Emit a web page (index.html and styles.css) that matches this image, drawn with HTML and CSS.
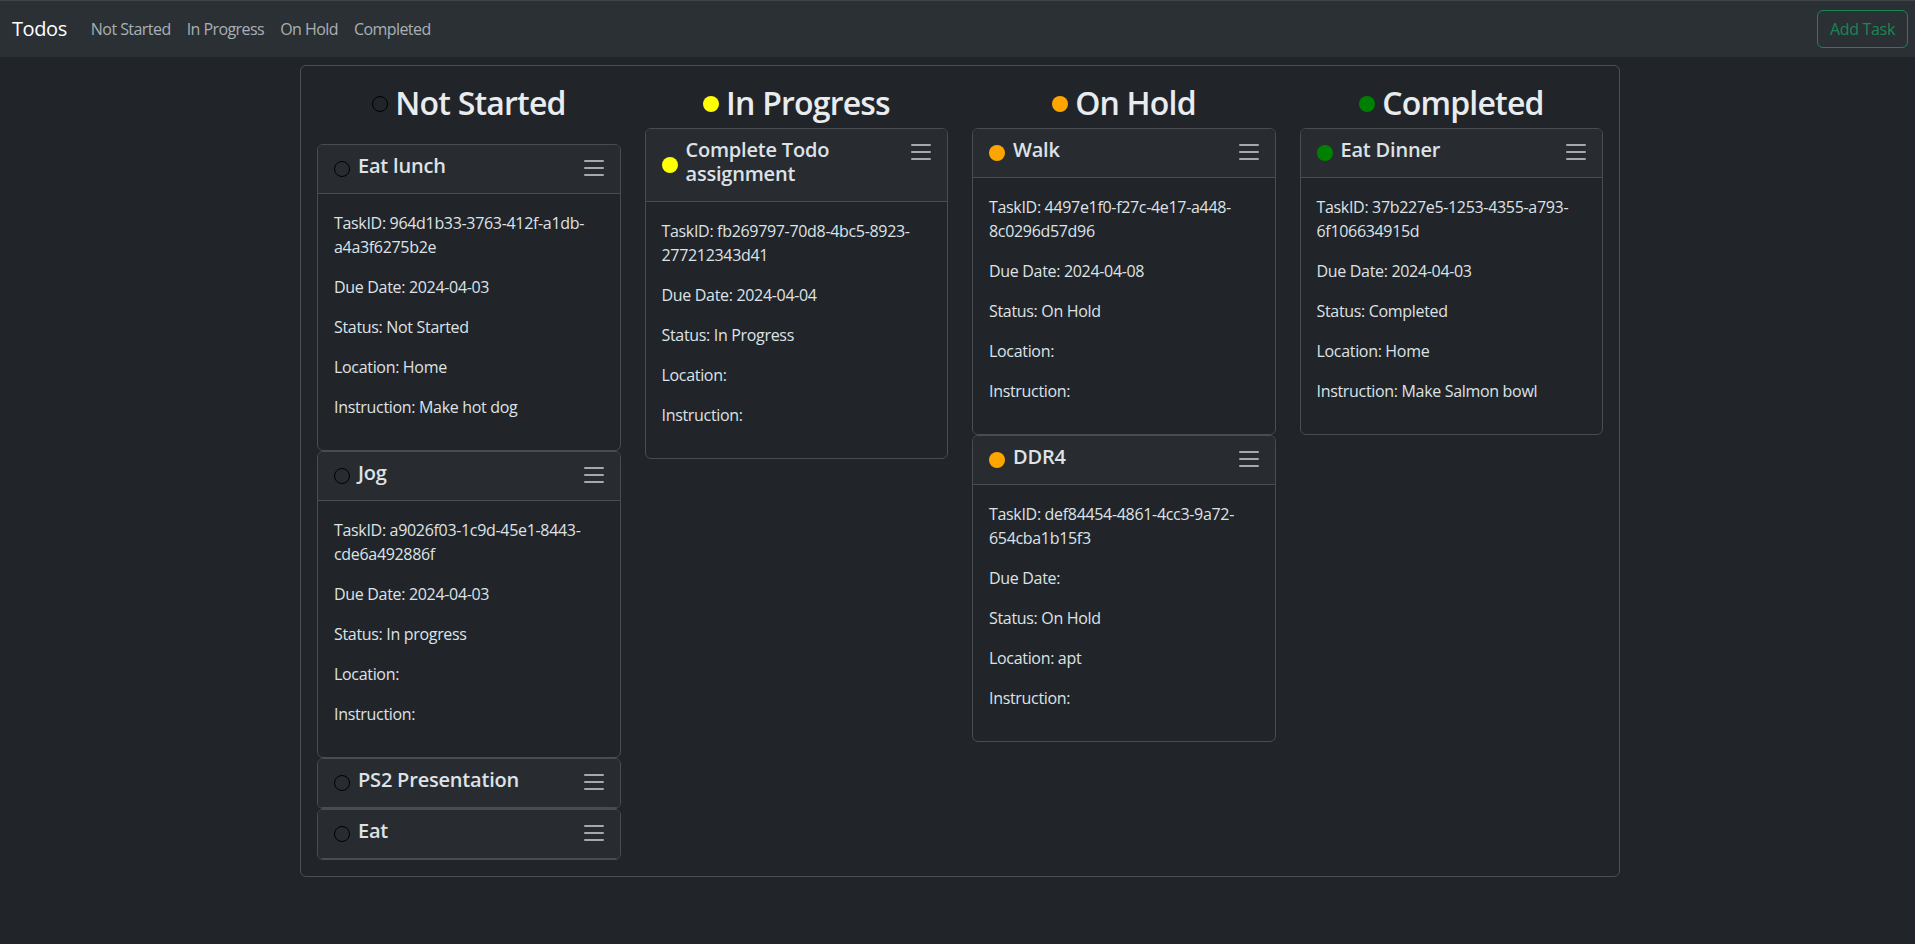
FILE: index.html
```html
<!DOCTYPE html>
<html lang="en">
<head>
<meta charset="utf-8">
<title>Todos</title>
<link rel="stylesheet" href="styles.css">
</head>
<body>
<div class="page">
  <nav class="navbar">
    <div class="nav-left">
      <a class="brand" href="#">Todos</a>
      <a class="nav-link" href="#">Not Started</a>
      <a class="nav-link" href="#">In Progress</a>
      <a class="nav-link" href="#">On Hold</a>
      <a class="nav-link" href="#">Completed</a>
    </div>
    <button class="btn-add">Add Task</button>
  </nav>

  <main class="board">
    <section class="column">
      <h2 class="col-title"><span class="dot dot-lg dot-none"></span> Not Started</h2>
      <div class="list list-first">
        <div class="card">
          <div class="card-header">
            <div class="title-wrap"><span class="dot dot-none"></span><h5 class="card-title">Eat lunch</h5></div>
            <svg class="menu" width="24" height="28" viewBox="0 0 24 28"><path d="M3 8h18M3 15h18M3 22h18"/></svg>
          </div>
          <div class="card-body">
            <p>TaskID: 964d1b33-3763-412f-a1db-a4a3f6275b2e</p>
            <p>Due Date: 2024-04-03</p>
            <p>Status: Not Started</p>
            <p>Location: Home</p>
            <p>Instruction: Make hot dog</p>
          </div>
        </div>
        <div class="card">
          <div class="card-header">
            <div class="title-wrap"><span class="dot dot-none"></span><h5 class="card-title">Jog</h5></div>
            <svg class="menu" width="24" height="28" viewBox="0 0 24 28"><path d="M3 8h18M3 15h18M3 22h18"/></svg>
          </div>
          <div class="card-body">
            <p>TaskID: a9026f03-1c9d-45e1-8443-cde6a492886f</p>
            <p>Due Date: 2024-04-03</p>
            <p>Status: In progress</p>
            <p>Location:</p>
            <p>Instruction:</p>
          </div>
        </div>
        <div class="card">
          <div class="card-header card-header-only">
            <div class="title-wrap"><span class="dot dot-none"></span><h5 class="card-title">PS2 Presentation</h5></div>
            <svg class="menu" width="24" height="28" viewBox="0 0 24 28"><path d="M3 8h18M3 15h18M3 22h18"/></svg>
          </div>
        </div>
        <div class="card">
          <div class="card-header card-header-only">
            <div class="title-wrap"><span class="dot dot-none"></span><h5 class="card-title">Eat</h5></div>
            <svg class="menu" width="24" height="28" viewBox="0 0 24 28"><path d="M3 8h18M3 15h18M3 22h18"/></svg>
          </div>
        </div>
      </div>
    </section>

    <section class="column">
      <h2 class="col-title"><span class="dot dot-lg dot-yellow"></span> In Progress</h2>
      <div class="list">
        <div class="card">
          <div class="card-header">
            <div class="title-wrap"><span class="dot dot-yellow"></span><h5 class="card-title">Complete Todo assignment</h5></div>
            <svg class="menu" width="24" height="28" viewBox="0 0 24 28"><path d="M3 8h18M3 15h18M3 22h18"/></svg>
          </div>
          <div class="card-body">
            <p>TaskID: fb269797-70d8-4bc5-8923-277212343d41</p>
            <p>Due Date: 2024-04-04</p>
            <p>Status: In Progress</p>
            <p>Location:</p>
            <p>Instruction:</p>
          </div>
        </div>
      </div>
    </section>

    <section class="column">
      <h2 class="col-title"><span class="dot dot-lg dot-orange"></span> On Hold</h2>
      <div class="list">
        <div class="card">
          <div class="card-header">
            <div class="title-wrap"><span class="dot dot-orange"></span><h5 class="card-title">Walk</h5></div>
            <svg class="menu" width="24" height="28" viewBox="0 0 24 28"><path d="M3 8h18M3 15h18M3 22h18"/></svg>
          </div>
          <div class="card-body">
            <p>TaskID: 4497e1f0-f27c-4e17-a448-8c0296d57d96</p>
            <p>Due Date: 2024-04-08</p>
            <p>Status: On Hold</p>
            <p>Location:</p>
            <p>Instruction:</p>
          </div>
        </div>
        <div class="card">
          <div class="card-header">
            <div class="title-wrap"><span class="dot dot-orange"></span><h5 class="card-title">DDR4</h5></div>
            <svg class="menu" width="24" height="28" viewBox="0 0 24 28"><path d="M3 8h18M3 15h18M3 22h18"/></svg>
          </div>
          <div class="card-body">
            <p>TaskID: def84454-4861-4cc3-9a72-654cba1b15f3</p>
            <p>Due Date:</p>
            <p>Status: On Hold</p>
            <p>Location: apt</p>
            <p>Instruction:</p>
          </div>
        </div>
      </div>
    </section>

    <section class="column">
      <h2 class="col-title"><span class="dot dot-lg dot-green"></span> Completed</h2>
      <div class="list">
        <div class="card">
          <div class="card-header">
            <div class="title-wrap"><span class="dot dot-green"></span><h5 class="card-title">Eat Dinner</h5></div>
            <svg class="menu" width="24" height="28" viewBox="0 0 24 28"><path d="M3 8h18M3 15h18M3 22h18"/></svg>
          </div>
          <div class="card-body">
            <p>TaskID: 37b227e5-1253-4355-a793-6f106634915d</p>
            <p>Due Date: 2024-04-03</p>
            <p>Status: Completed</p>
            <p>Location: Home</p>
            <p>Instruction: Make Salmon bowl</p>
          </div>
        </div>
      </div>
    </section>
  </main>
</div>
</body>
</html>
```

FILE: styles.css
```css
html {
  overflow: hidden;
  background: #212529;
}
body {
  margin: 0;
  background: #212529;
  color: #dee2e6;
  font-family: "Open Sans", "Noto Sans", sans-serif;
  font-size: 16px;
  line-height: 1.5;
}
.page {
  width: 1920px;
  min-height: 944px;
}
.navbar {
  display: flex;
  align-items: center;
  justify-content: space-between;
  background: #2b3035;
  border-top: 1px solid #3f4449;
  padding: 8px 12px;
}
.nav-left {
  display: flex;
  align-items: center;
}
.brand {
  color: #fff;
  font-size: 20px;
  text-decoration: none;
  margin-right: 16px;
  padding: 5px 0;
  line-height: 1.5;
  letter-spacing: -0.02em;
}
.nav-link {
  color: rgba(222, 226, 230, 0.72);
  text-decoration: none;
  padding: 8px;
  letter-spacing: -0.035em;
}
.btn-add {
  font-family: inherit;
  font-size: 16px;
  line-height: 1.5;
  color: #198754;
  background: transparent;
  border: 1px solid #198754;
  border-radius: 6px;
  padding: 6px 12px;
  letter-spacing: -0.02em;
}
.board {
  width: 1320px;
  box-sizing: border-box;
  margin: 8px auto 0;
  border: 1px solid #495057;
  border-radius: 6px;
  padding: 16px;
  display: grid;
  grid-template-columns: repeat(4, 1fr);
  column-gap: 24px;
  align-items: start;
}
.col-title {
  margin: 0 0 6px;
  padding-top: 2px;
  font-size: 32px;
  font-weight: 600;
  line-height: 1.2;
  text-align: center;
  color: #e9ecef;
  letter-spacing: -0.025em;
}
.list-first {
  padding-top: 16px;
}
.dot {
  display: inline-block;
  width: 16px;
  height: 16px;
  border-radius: 50%;
  box-sizing: border-box;
  flex-shrink: 0;
}
.dot-lg {
  vertical-align: middle;
  position: relative;
  top: -2px;
}
.dot-none {
  border: 1.5px solid #000;
}
.dot-yellow {
  background: #ffff00;
}
.dot-orange {
  background: #ffa500;
}
.dot-green {
  background: #008000;
}
.card {
  border: 1px solid #484d52;
  border-radius: 6px;
  background: #212529;
  overflow: hidden;
}
.card-header {
  display: flex;
  align-items: flex-start;
  justify-content: space-between;
  padding: 8px 16px 8px 16px;
  background: #282c31;
  border-bottom: 1px solid #484d52;
}
.card-header-only {
  border-bottom: 1px solid #484d52;
}
.title-wrap {
  display: flex;
  align-items: center;
  min-width: 0;
}
.title-wrap .dot {
  margin-right: 8px;
}
.card-title {
  margin: 0 0 7px;
  padding-top: 1px;
  font-size: 20px;
  font-weight: 600;
  line-height: 1.2;
  color: #dee2e6;
  max-width: 200px;
  letter-spacing: -0.01em;
}
.menu {
  flex-shrink: 0;
  margin-right: -2px;
}
.menu path {
  stroke: #a5a8ac;
  stroke-width: 2;
  stroke-linecap: round;
  fill: none;
}
.card-body {
  padding: 17px 16px 15px;
}
.card-body p {
  margin: 0 0 16px;
  letter-spacing: -0.02em;
}
```
